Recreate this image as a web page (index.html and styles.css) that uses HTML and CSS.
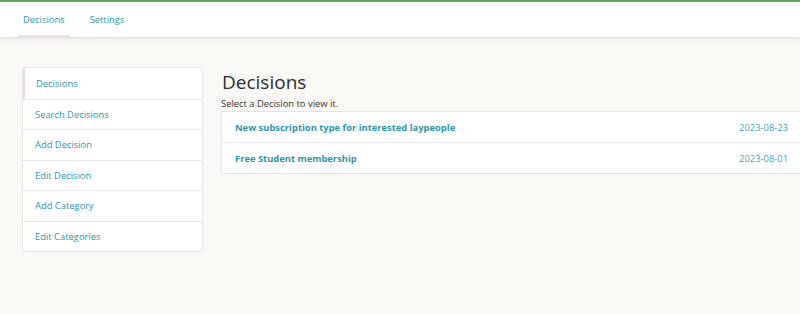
FILE: index.html
```html
<!DOCTYPE html>
<html>
<head>
<meta charset="utf-8">
<link rel="stylesheet" href="styles.css">
</head>
<body>
<header class="topbar">
  <nav class="tabs">
    <a class="tab active">Decisions</a>
    <a class="tab">Settings</a>
  </nav>
</header>
<div class="page">
  <aside class="sidebar">
    <a class="side-item active">Decisions</a>
    <a class="side-item">Search Decisions</a>
    <a class="side-item">Add Decision</a>
    <a class="side-item">Edit Decision</a>
    <a class="side-item">Add Category</a>
    <a class="side-item">Edit Categories</a>
  </aside>
  <main class="main">
    <h1 class="title">Decisions</h1>
    <p class="hint">Select a Decision to view it.</p>
    <div class="list">
      <div class="row"><a class="row-title">New subscription type for interested laypeople</a><span class="row-date">2023-08-23</span></div>
      <div class="row"><a class="row-title">Free Student membership</a><span class="row-date">2023-08-01</span></div>
    </div>
  </main>
</div>
</body>
</html>
```
FILE: styles.css
```css
html, body { margin: 0; padding: 0; }
body {
  background: #f9f8f5;
  font-family: "Open Sans", "Noto Sans", sans-serif;
  font-size: 9.4px;
  color: #333;
  overflow: hidden;
  height: 314px;
}
.topbar {
  background: #fff;
  border-top: 2px solid #5aaa5e;
  height: 35px;
  box-shadow: 0 1px 2px rgba(0,0,0,0.08), 0 3px 8px rgba(0,0,0,0.06);
  position: relative;
}
.tabs { display: flex; padding-left: 18px; height: 100%; }
.tab {
  color: #2b96a8;
  padding: 0 5px;
  margin-right: 15px;
  display: flex;
  align-items: center;
  height: 100%;
  box-sizing: border-box;
  border-bottom: 2px solid transparent;
  padding-top: 1px;
}
.tab.active { border-bottom-color: #f1d9f1; }
.page {
  display: flex;
  padding: 30px 0 0 22px;
  gap: 18px;
}
.sidebar {
  width: 181px;
  box-sizing: border-box;
  background: #fff;
  border: 1px solid #e4e4e4;
  border-radius: 3px;
  display: flex;
  flex-direction: column;
  flex-shrink: 0;
  align-self: flex-start;
}
.side-item {
  height: 30.5px;
  display: flex;
  align-items: center;
  padding-left: 12px;
  color: #2b96a8;
  border-top: 1px solid #e6e6e6;
  box-sizing: border-box;
}
.side-item:first-child { border-top: none; border-left: 2px solid #ecd4ec; padding-left: 11px; }
.main { flex: 1; min-width: 0; }
.title {
  font-weight: 400;
  font-size: 19px;
  margin: 0 0 0 1px;
  line-height: 28px;
  padding-top: 1px;
  color: #2c2c2c;
}
.hint { margin: 0; line-height: 14px; font-size: 9.4px; color: #333; padding-top: 1px; }
.list {
  background: #fff;
  border: 1px solid #e4e4e4;
  border-right: none;
  margin-right: -1px;
}
.row {
  display: flex;
  justify-content: space-between;
  align-items: center;
  height: 30px;
  padding: 0 13px 0 13px;
  border-top: 1px solid #e6e6e6;
}
.row:first-child { border-top: none; }
.row-title { color: #2b96a8; font-weight: 700; }
.row-date { color: #3ea5b8; }
```
